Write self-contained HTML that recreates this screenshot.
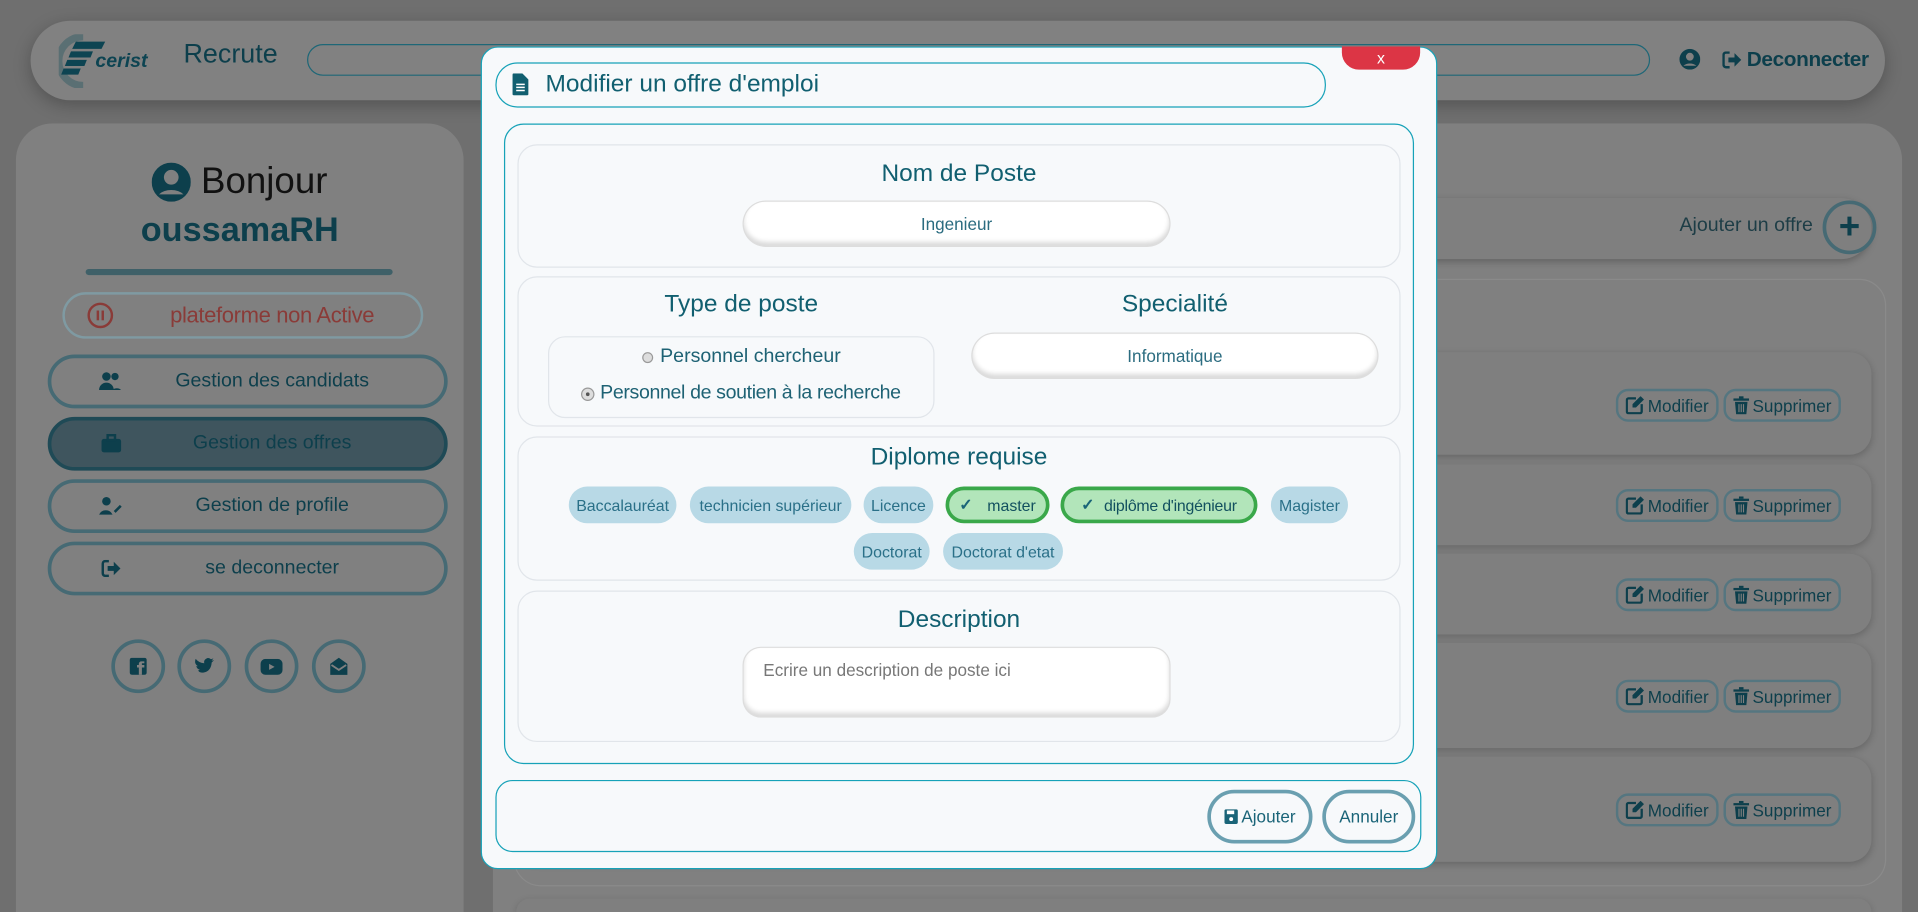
<!DOCTYPE html>
<html><head><meta charset="utf-8"><style>
*{box-sizing:border-box;margin:0;padding:0}
html,body{width:1918px;height:912px;overflow:hidden;background:#6f6f6f}
#w{position:absolute;left:0;top:0;width:1568px;height:746px;overflow:hidden;transform:scale(1.22321,1.2225);transform-origin:0 0;font-family:"Liberation Sans",sans-serif;color:#0d3f4c;white-space:nowrap}
.a{position:absolute}
.c{display:flex;align-items:center;justify-content:center}
.nav{left:25px;top:17px;width:1516px;height:65px;background:#818181;border-radius:33px;box-shadow:0 4px 14px rgba(0,0,0,.25)}
.side{left:13px;top:101px;width:366px;height:645px;background:#808080;border-radius:30px 30px 0 0}
.main{left:403px;top:101px;width:1152px;height:645px;background:#808080;border-radius:30px 30px 0 0}
.sb{left:39px;width:327px;height:44px;border:3px solid #466a74;border-radius:22px;font-size:16px;color:#0d3f4c;padding-left:40px}
.sb svg{position:absolute;left:38px}
.soc{width:44px;height:44px;border:3px solid #466a74;border-radius:50%;top:523px}
.card{left:422px;width:1108px;background:#7f7f7f;border-radius:18px;box-shadow:0 2px 6px rgba(0,0,0,.2)}
.btn{height:27px;border:2px solid #557680;border-radius:10px;font-size:14px;color:#0d3f4c;gap:3px;padding:0 4px}
.modal{left:393px;top:38px;width:782px;height:673px;background:#f7f9fb;border:1px solid #17a2b8;border-radius:14px}
.sec{left:423px;width:722px;border:1px solid #e1e5ea;border-radius:16px;background:#f7f9fb}
.h{font-size:20px;color:#115f70;text-align:center;position:absolute}
.inp{background:#fff;border-radius:18px;box-shadow:inset 0 -3px 4px rgba(0,0,0,.15),0 0 0 1px #ddd;font-size:14px;color:#2b6c80}
.chip{height:30px;border-radius:15px;background:#b8d9e6;color:#2a7088;font-size:13px;padding:0 6px;top:398px}
.g{background:#b2e5ba;border:3px solid #3aa84a;color:#12505f}
.fb{height:44px;border:3px solid #6a9fb0;border-radius:22px;font-size:14px;color:#1a6478;top:646px}
</style></head><body><div id="w">
<svg width="0" height="0" style="position:absolute"><defs>
<symbol id="out" viewBox="0 0 16 14"><path d="M6 1H3a2 2 0 0 0-2 2v8a2 2 0 0 0 2 2h3" fill="none" stroke="currentColor" stroke-width="2"/><path d="M5 5h5V1.5L15.5 7 10 12.5V9H5z" fill="currentColor"/></symbol>
<symbol id="ed" viewBox="0 0 16 16"><path d="M9 2H2.5A1.5 1.5 0 0 0 1 3.5v10A1.5 1.5 0 0 0 2.5 15h10a1.5 1.5 0 0 0 1.5-1.5V7" fill="none" stroke="currentColor" stroke-width="2"/><path d="M13 0l3 3-7 7H6V7z" fill="currentColor"/></symbol>
<symbol id="tr" viewBox="0 0 14 16"><rect x="0" y="2" width="14" height="2" fill="currentColor"/><rect x="5" y="0" width="4" height="2" fill="currentColor"/><path d="M1.5 5h11l-1 11h-9z" fill="currentColor"/><path d="M5 7v7M7 7v7M9 7v7" stroke="#7f7f7f" stroke-width="1"/></symbol>
</defs></svg>
<div class="a nav"></div>
<svg class="a" style="left:48px;top:28px" width="82" height="44" viewBox="0 0 82 44"><path d="M20 2a20 20 0 1 0 0 40" fill="none" stroke="#5a6f73" stroke-width="6"/><path d="M14 6h24l-3 6H11zM10 14h18l-2 5H8zM7 21h16l-2 5H5zM4 28h14l-2 5H2z" fill="#0d4452"/><text x="30" y="27" font-family="Liberation Sans" font-style="italic" font-weight="bold" font-size="16" fill="#0d4452">cerist</text></svg>
<div class="a" style="left:150px;top:31px;font-size:22px">Recrute</div>
<div class="a" style="left:251px;top:36px;width:1098px;height:26px;border:1px solid #1e6777;border-radius:13px"></div>
<svg class="a" style="left:1373px;top:40px" width="17" height="17" viewBox="0 0 16 16"><circle cx="8" cy="8" r="8" fill="#0d3f4c"/><circle cx="8" cy="6" r="3" fill="#808080"/><path d="M3 13a6 4 0 0 1 10 0" fill="#808080"/></svg>
<svg class="a" style="left:1408px;top:42px;color:#0d3f4c" width="16" height="14"><use href="#out"/></svg>
<div class="a" style="left:1428px;top:39px;font-size:17px;font-weight:bold;letter-spacing:-0.3px">Deconnecter</div>

<div class="a side"></div>
<div class="a c" style="left:13px;top:132px;width:366px;font-size:30px;color:#111;gap:8px"><svg width="32" height="32" viewBox="0 0 16 16"><circle cx="8" cy="8" r="8" fill="#0d3f4c"/><circle cx="8" cy="6" r="3" fill="#808080"/><path d="M3 13a6 4 0 0 1 10 0" fill="#808080"/></svg>Bonjour</div>
<div class="a" style="left:13px;top:172px;width:366px;text-align:center;font-size:28px;font-weight:bold">oussamaRH</div>
<div class="a" style="left:70px;top:220px;width:251px;height:5px;background:#3f6068;border-radius:3px"></div>
<div class="a c" style="left:51px;top:239px;width:295px;height:38px;border:2px solid #7f9aa2;border-radius:19px;color:#8a3b38;font-size:18px"><svg class="a" style="left:18px" width="22" height="22" viewBox="0 0 22 22"><circle cx="11" cy="11" r="9.5" fill="none" stroke="#8a3b38" stroke-width="2"/><rect x="8" y="7" width="2" height="8" fill="#8a3b38"/><rect x="12" y="7" width="2" height="8" fill="#8a3b38"/></svg><span style="margin-left:48px;letter-spacing:-0.3px">plateforme non Active</span></div>
<div class="a c sb" style="top:290px"><svg width="20" height="16" viewBox="0 0 20 16"><circle cx="7" cy="4" r="3.5" fill="#0d3f4c"/><circle cx="14" cy="4" r="3" fill="#0d3f4c"/><path d="M1 15a6 6 0 0 1 12 0zM12 15a5 5 0 0 1 7 0z" fill="#0d3f4c"/></svg>Gestion des candidats</div>
<div class="a c sb" style="top:341px;background:#3f555e;border-color:#1f4a56">Gestion des offres<svg width="18" height="16" viewBox="0 0 18 16" style="left:40px"><rect x="1" y="4" width="16" height="11" rx="2" fill="#0d3f4c"/><rect x="6" y="1" width="6" height="4" fill="none" stroke="#0d3f4c" stroke-width="2"/></svg></div>
<div class="a c sb" style="top:392px"><svg width="20" height="16" viewBox="0 0 20 16"><circle cx="7" cy="4" r="3.5" fill="#0d3f4c"/><path d="M1 15a6 6 0 0 1 11 0z M13 12l5-5 1.5 1.5-5 5z" fill="#0d3f4c"/></svg>Gestion de profile</div>
<div class="a c sb" style="top:443px"><svg width="16" height="14" style="left:41px;color:#0d3f4c"><use href="#out"/></svg>se deconnecter</div>
<div class="a c soc" style="left:91px"><svg width="14" height="14"><rect width="14" height="14" rx="2" fill="#0d3f4c"/><path d="M10 14V8h2V6h-2V4.5h2V3h-2.5A2 2 0 0 0 7.5 5v1H6v2h1.5v6z" fill="#808080"/></svg></div>
<div class="a c soc" style="left:145px"><svg width="16" height="14" viewBox="0 0 16 14"><path d="M16 2l-2 .5 1.5-2-2 .8A3.3 3.3 0 0 0 8 4.5 9 9 0 0 1 1 1s-2 4 2 6l-1.5-.2c.3 2 2 3 3 3L3 10.5S4 13 8 12c5-1 6-6 6-8z" fill="#0d3f4c"/></svg></div>
<div class="a c soc" style="left:200px"><svg width="18" height="13"><rect width="18" height="13" rx="4" fill="#0d3f4c"/><path d="M7 4v5l4.5-2.5z" fill="#808080"/></svg></div>
<div class="a c soc" style="left:255px"><svg width="16" height="16" viewBox="0 0 16 16"><path d="M1 6l7-5 7 5v9H1z" fill="#0d3f4c"/><path d="M2 7l6 4 6-4" fill="none" stroke="#808080" stroke-width="1.5"/></svg></div>

<div class="a main"></div>
<div class="a" style="left:422px;top:162px;width:1108px;height:50px;border-radius:25px;box-shadow:0 2px 6px rgba(0,0,0,.25);background:#7f7f7f"></div>
<div class="a" style="left:1373px;top:176px;font-size:16px;color:#1d3d46">Ajouter un offre</div>
<div class="a c" style="left:1490px;top:164px;width:44px;height:44px;border:3px solid #466a74;border-radius:50%;font-size:30px;font-weight:bold;color:#0d3f4c">+</div>
<div class="a" style="left:420px;top:228px;width:1122px;height:497px;border:1px solid #8a8a8a;border-radius:22px"></div>
<div class="a card" style="top:288px;height:84px"></div>
<div class="a card" style="top:380px;height:66px"></div>
<div class="a card" style="top:453px;height:66px"></div>
<div class="a card" style="top:526px;height:86px"></div>
<div class="a card" style="top:619px;height:86px"></div>
<div class="a card" style="top:735px;height:11px;border-radius:18px 18px 0 0"></div>
<div class="a" style="left:1321px;top:318px"><div class="a c btn" style="left:0;width:84px"><svg width="15" height="15"><use href="#ed"/></svg>Modifier</div><div class="a c btn" style="left:88px;width:96px"><svg width="13" height="15"><use href="#tr"/></svg>Supprimer</div></div>
<div class="a" style="left:1321px;top:400px"><div class="a c btn" style="left:0;width:84px"><svg width="15" height="15"><use href="#ed"/></svg>Modifier</div><div class="a c btn" style="left:88px;width:96px"><svg width="13" height="15"><use href="#tr"/></svg>Supprimer</div></div>
<div class="a" style="left:1321px;top:473px"><div class="a c btn" style="left:0;width:84px"><svg width="15" height="15"><use href="#ed"/></svg>Modifier</div><div class="a c btn" style="left:88px;width:96px"><svg width="13" height="15"><use href="#tr"/></svg>Supprimer</div></div>
<div class="a" style="left:1321px;top:556px"><div class="a c btn" style="left:0;width:84px"><svg width="15" height="15"><use href="#ed"/></svg>Modifier</div><div class="a c btn" style="left:88px;width:96px"><svg width="13" height="15"><use href="#tr"/></svg>Supprimer</div></div>
<div class="a" style="left:1321px;top:649px"><div class="a c btn" style="left:0;width:84px"><svg width="15" height="15"><use href="#ed"/></svg>Modifier</div><div class="a c btn" style="left:88px;width:96px"><svg width="13" height="15"><use href="#tr"/></svg>Supprimer</div></div>

<div class="a modal"></div>
<div class="a c" style="left:1097px;top:38px;width:64px;height:19px;background:#dc3545;border-radius:0 0 14px 14px;color:#fff;font-size:13px">x</div>
<div class="a" style="left:405px;top:51px;width:679px;height:37px;border:1px solid #17a2b8;border-radius:18px"></div>
<svg class="a" style="left:419px;top:60px" width="13" height="18" viewBox="0 0 13 18"><path d="M0 1a1 1 0 0 1 1-1h7l5 5v12a1 1 0 0 1-1 1H1a1 1 0 0 1-1-1z" fill="#115f70"/><path d="M3 9h7M3 11.5h7M3 14h7" stroke="#fff" stroke-width="1.2"/></svg>
<div class="a" style="left:446px;top:58px;font-size:20px;color:#115f70">Modifier un offre d'emploi</div>
<div class="a" style="left:412px;top:101px;width:744px;height:524px;border:1px solid #17a2b8;border-radius:16px"></div>

<div class="a sec" style="top:118px;height:101px"></div>
<div class="h" style="left:423px;width:722px;top:131px">Nom de Poste</div>
<div class="a c inp" style="left:608px;top:165px;width:348px;height:36px">Ingenieur</div>

<div class="a sec" style="top:226px;height:123px"></div>
<div class="h" style="left:448px;width:316px;top:238px">Type de poste</div>
<div class="a" style="left:448px;top:275px;width:316px;height:67px;border:1px solid #e1e5ea;border-radius:14px"></div>
<div class="a c" style="left:448px;top:283px;width:316px;font-size:16px;color:#1e6274;gap:6px"><span style="width:9px;height:9px;border-radius:50%;border:1px solid #999;background:#ddd"></span>Personnel chercheur</div>
<div class="a c" style="left:448px;top:313px;width:316px;font-size:16px;color:#1e6274;gap:6px;letter-spacing:-0.3px"><span style="width:9px;height:9px;border-radius:50%;border:3px solid #ddd;background:#555;box-shadow:0 0 0 1px #999"></span>Personnel de soutien à la recherche</div>
<div class="h" style="left:795px;width:331px;top:238px">Specialité</div>
<div class="a c inp" style="left:795px;top:273px;width:331px;height:36px">Informatique</div>

<div class="a sec" style="top:357px;height:118px"></div>
<div class="h" style="left:423px;width:722px;top:363px">Diplome requise</div>
<div class="a c chip" style="left:465px;width:88px">Baccalauréat</div>
<div class="a c chip" style="left:564px;width:132px">technicien supérieur</div>
<div class="a c chip" style="left:706px;width:57px">Licence</div>
<div class="a c chip g" style="left:773px;width:85px;gap:12px"><b style="color:#1a6478">&#10003;</b>master</div>
<div class="a c chip g" style="left:867px;width:161px;gap:8px;letter-spacing:-0.2px"><b style="color:#1a6478">&#10003;</b>diplôme d'ingénieur</div>
<div class="a c chip" style="left:1039px;width:63px">Magister</div>
<div class="a c chip" style="left:698px;width:62px;top:436px">Doctorat</div>
<div class="a c chip" style="left:771px;width:98px;top:436px">Doctorat d'etat</div>

<div class="a sec" style="top:483px;height:124px"></div>
<div class="h" style="left:423px;width:722px;top:496px">Description</div>
<div class="a inp" style="left:608px;top:530px;width:348px;height:56px;border-radius:14px;padding:10px 16px;color:#777">Ecrire un description de poste ici</div>

<div class="a" style="left:405px;top:638px;width:757px;height:59px;border:1px solid #17a2b8;border-radius:14px"></div>
<div class="a c fb" style="left:987px;width:86px;gap:3px"><svg width="11" height="12" viewBox="0 0 11 12"><rect width="11" height="12" rx="1.5" fill="#1a6478"/><rect x="2" y="1" width="6" height="3" fill="#fff"/><circle cx="5.5" cy="8" r="1.6" fill="#fff"/></svg>Ajouter</div>
<div class="a c fb" style="left:1081px;width:76px">Annuler</div>
</div></body></html>
